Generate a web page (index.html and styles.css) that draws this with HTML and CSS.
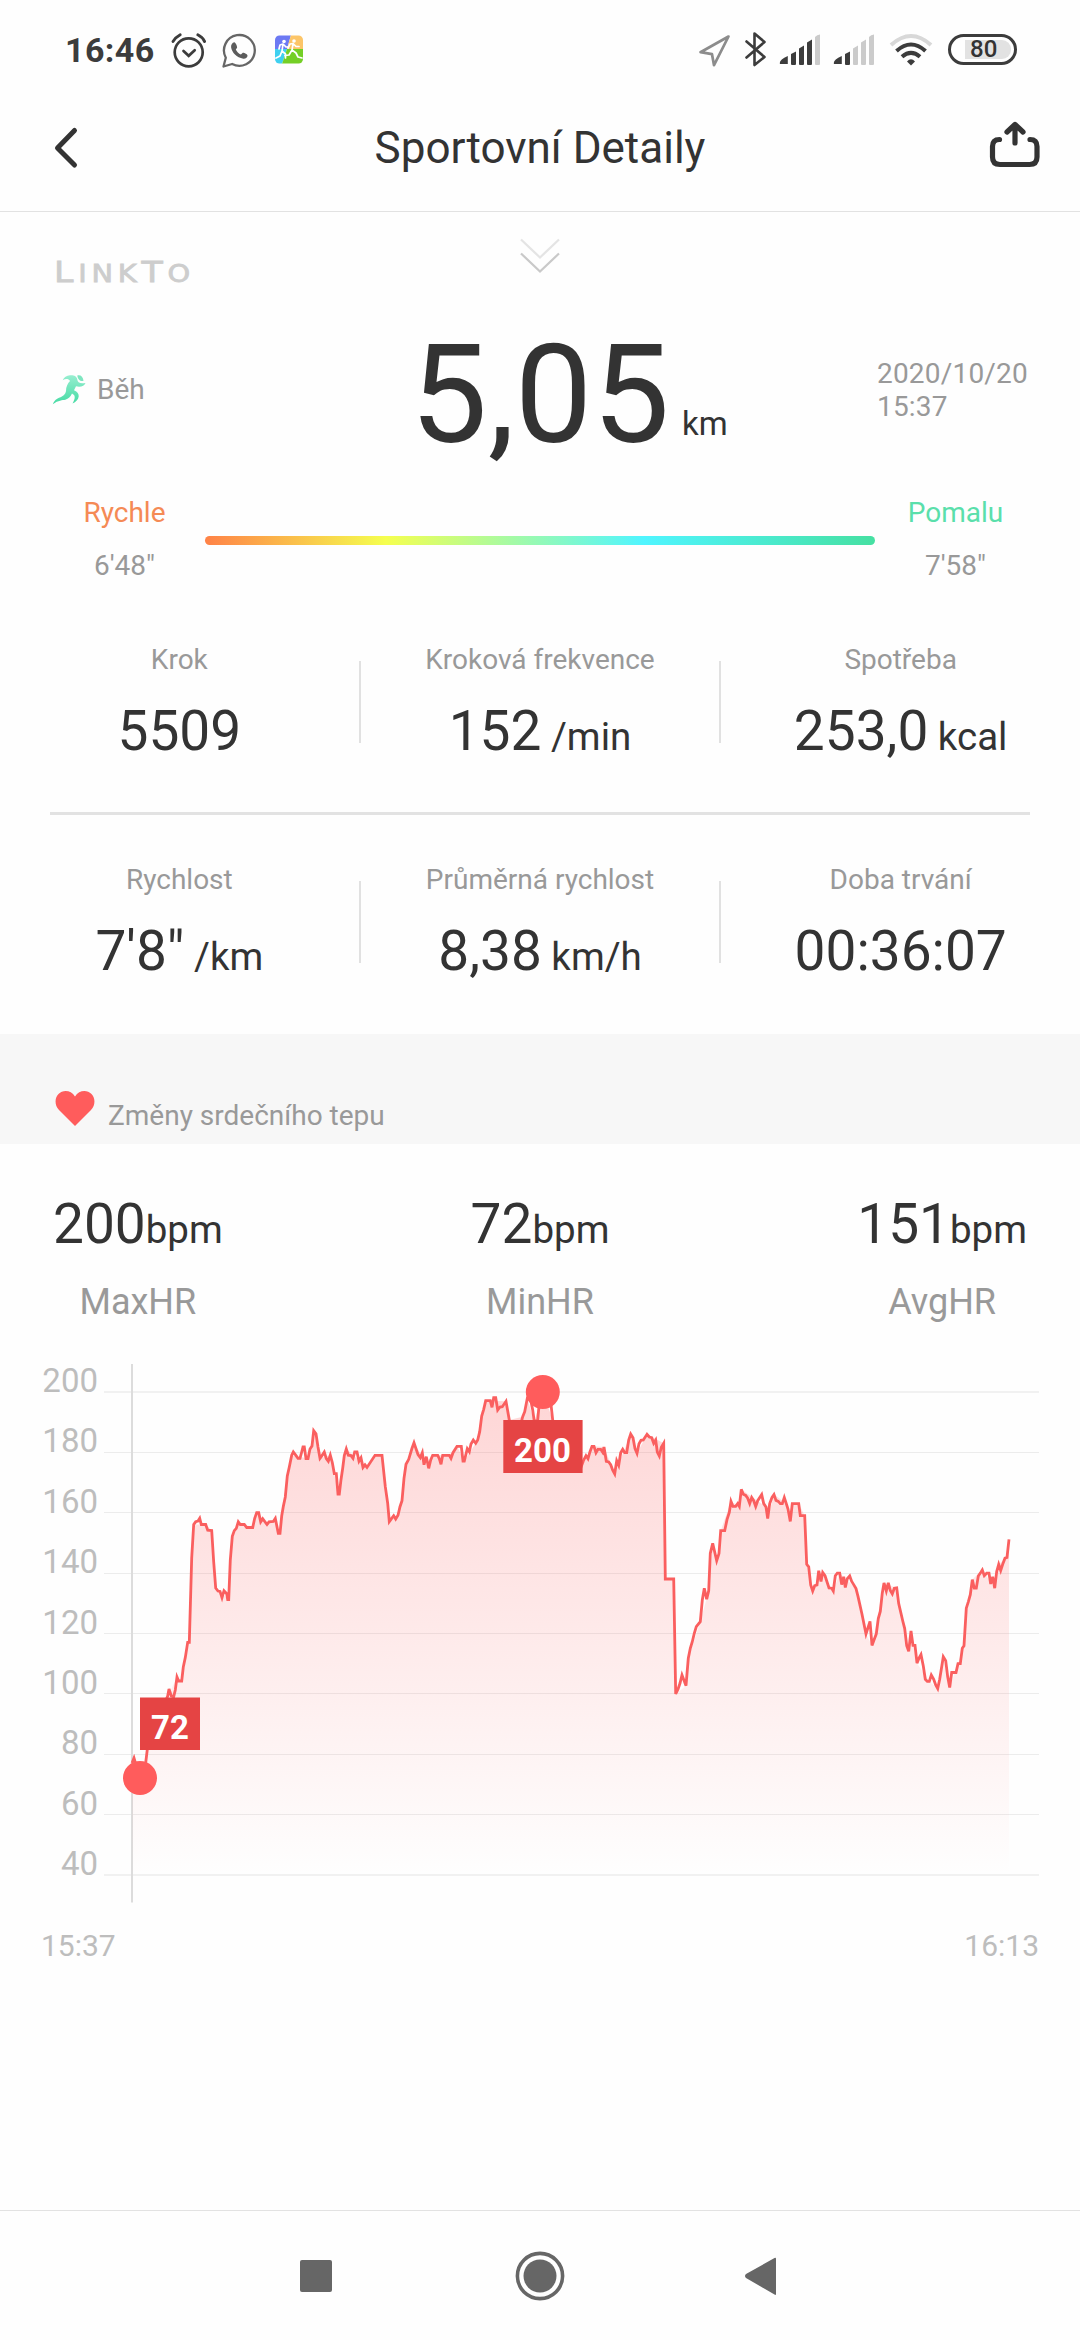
FILE: index.html
```html
<!DOCTYPE html>
<html lang="cs">
<head>
<meta charset="utf-8">
<title>Sportovní Detaily</title>
<link rel="stylesheet" href="styles.css">
</head>
<body>
<div class="screen">
  <div class="status">
    <span class="time">16:46</span>
    <svg class="i-alarm" width="38" height="40" viewBox="170 30 38 40" fill="none" stroke="#3c3c3c" stroke-linecap="round">
      <circle cx="188.7" cy="52.3" r="14" stroke-width="2.7"/>
      <path d="M183.5 51l5.2 4.8 6-5.6" stroke-width="2.7"/>
      <path d="M173 41.5c2-3 4-5 7.200-6.700M197.800 34.800c3 1.500 5.300 3.700 6.800 6.700" stroke-width="2.900"/>
    </svg>
    <svg class="i-wa" width="38" height="40" viewBox="220 30 38 40">
      <path d="M223.500 66.500l2.300-8.800a15.400 15.400 0 1 1 6.300 6.300z" fill="none" stroke="#666" stroke-width="2.300" stroke-linejoin="round"/>
      <path d="M234.300 42.300c-2 .3-3.500 2.700-3.200 5 .8 5.300 5.500 10.200 12.200 11.500 2.200.3 4.400-1.300 4.200-3.500-.1-1-3.800-2.900-4.700-2.500l-1.900 1.800c-2.200-.9-4.200-2.900-5.100-5l1.300-1.900c.4-.9-1.600-5.500-2.800-5.400z" fill="#5c5c5c"/>
    </svg>
    <svg class="i-app" width="30" height="40" viewBox="274 30 30 40">
      <defs><clipPath id="app"><rect x="275" y="35.500" width="28" height="28" rx="4.500"/></clipPath></defs>
      <g clip-path="url(#app)">
        <path d="M275 35h16l-4 14h-12z" fill="#6c79f3"/>
        <path d="M291 35h12v14h-16z" fill="#fcc568"/>
        <path d="M275 49h12l-5 15h-7z" fill="#3fd0f0"/>
        <path d="M287 49h16v15h-21z" fill="#74cf26"/>
      </g>
      <g fill="none" stroke="#fff" stroke-width="1.700" stroke-linecap="round" stroke-linejoin="round">
        <path d="M283 44l-1 7 3.500 3v4M282 51l-2 5-4 2M279 49l1-4 3-1 3 3h2"/>
        <path d="M293 44l-1 6 4 3 2 4 4 1M292 50l-3 5-4 .500M288 48l2-4 3-.500 3 3h3"/>
      </g>
      <circle cx="284" cy="41.500" r="1.800" fill="#fff"/><circle cx="294" cy="41" r="1.800" fill="#fff"/>
    </svg>
    <span class="spacer"></span>
    <svg width="34" height="40" viewBox="698 30 34 40"><path d="M728.500 36.500l-28 15.700 11.500 2 2 11z" fill="none" stroke="#8c8c8c" stroke-width="2.700" stroke-linejoin="round"/></svg>
    <svg class="i-bt" width="24" height="40" viewBox="744 30 24 40"><path d="M746.500 41.500l18 15.500-10 8V33.500l10 8.500-18 15.500" fill="none" stroke="#3c3c3c" stroke-width="2.600" stroke-linecap="round" stroke-linejoin="round"/></svg>
    <svg class="i-sig" width="42" height="40" viewBox="779 30 42 40" fill="#3c3c3c">
      <path d="M780 64q-1.500-4 7.800-8V64zM791 54l5-2.500V64q0 1-1 1h-3q-1 0-1-1zM799 48.500l5-3V64q0 1-1 1h-3q-1 0-1-1zM807 42.500l5-3V64q0 1-1 1h-3q-1 0-1-1z"/>
      <path d="M815 37q2-2.500 5-2.500V64q0 1-1 1h-3q-1 0-1-1z" fill="#cbcbcb"/>
    </svg>
    <svg class="i-sig2" width="42" height="40" viewBox="779 30 42 40" fill="#3c3c3c">
      <path d="M780 64q-1.500-4 7.800-8V64zM791 54l5-2.500V64q0 1-1 1h-3q-1 0-1-1z"/>
      <path d="M799 48.500l5-3V64q0 1-1 1h-3q-1 0-1-1zM807 42.500l5-3V64q0 1-1 1h-3q-1 0-1-1zM815 37q2-2.500 5-2.500V64q0 1-1 1h-3q-1 0-1-1z" fill="#cbcbcb"/>
    </svg>
    <svg class="i-wifi" width="44" height="40" viewBox="889 30 44 40" fill="none" stroke="#3c3c3c">
      <path d="M891 45Q911 27 931 45" stroke="#d8d8d8" stroke-width="4"/>
      <path d="M896.500 51Q911 38 925.500 51" stroke-width="4"/>
      <path d="M902 56.800Q911 49 920 56.800" stroke-width="4"/>
      <path d="M907 61.500q4-4.500 8 0l-4 4z" fill="#3c3c3c" stroke="none"/>
    </svg>
    <div class="battery"><span>80</span></div>
  </div>

  <header class="header">
    <svg width="30" height="44" viewBox="50 127 30 44"><path d="M74.500 131.500L57.500 149l17 17" fill="none" stroke="#333" stroke-width="5" stroke-linecap="round" stroke-linejoin="round"/></svg>
    <h1>Sportovní Detaily</h1>
    <svg class="share" width="54" height="52" viewBox="987 119 54 52" fill="none" stroke="#333" stroke-width="5.200" stroke-linecap="round" stroke-linejoin="round">
      <path d="M998.500 139.500q-7 0-7 7V157q0 7.500 7.500 7.500h29.500q7.500 0 7.500-7.500v-10.500q0-7-7-7"/>
      <path d="M1014 143V124.500M1006 132l8-7.500 8 7.500"/>
    </svg>
  </header>

  <div class="brand-row">
    <svg width="170" height="54" viewBox="44 245 170 54" class="brand"><text x="54" y="281.500" font-size="29" textLength="141" lengthAdjust="spacingAndGlyphs">L<tspan font-size="24">INK</tspan>T<tspan font-size="24">O</tspan></text></svg>
    <svg width="42" height="40" viewBox="519 235 42 40" fill="none" stroke-width="2.200">
      <path d="M521 239.500l19 18 19-18" stroke="#e4e4e4"/><path d="M521 253.500l19 18 19-18" stroke="#c9c9c9"/>
    </svg>
  </div>

  <div class="distance">
    <div class="sport">
      <svg width="36" height="34" viewBox="52 372 36 34">
        <defs><linearGradient id="run" x1="0" y1="0" x2="0" y2="1"><stop offset="0" stop-color="#97eed0"/><stop offset="1" stop-color="#46dba4"/></linearGradient></defs>
        <path d="M62.700 379.300C64 376.500 66.500 374.600 70 374.300 74 374 77 375.500 77.300 378.500 77.500 381.500 80 383 85.500 382 84.500 385 80.500 386.500 76 385.300L74 389.300C77.500 391 79 393 78.700 395.500 78.300 398.500 76 401 72.500 402.500 74.500 399 75.500 396 74 394L72 392.500C70.500 395.500 68.500 398 65.300 398.700 62.500 399.300 58.500 399 52.700 403.200 54 400 56.500 397.500 59 396.700 63.500 395.500 65.500 393 66 390 66 386 67.500 382.500 70 380 68.500 377.500 65.500 377.500 62.700 379.300z" fill="url(#run)"/>
        <path d="M77.300 374.500c3-1 5.800 1 6.200 5.300-3 1-5.800-1.300-6.200-5.300z" fill="#7fe6c0"/>
      </svg>
      <span>Běh</span>
    </div>
    <div class="number">5,05</div>
    <div class="right"><span class="km">km</span><span class="date">2020/10/20<br>15:37</span></div>
  </div>

  <div class="pace">
    <div><div class="fast">Rychle</div><div>6'48"</div></div>
    <div class="bar"></div>
    <div><div class="slow">Pomalu</div><div>7'58"</div></div>
  </div>

  <div class="stats">
    <div><label>Krok</label><p>5509</p></div><i></i>
    <div><label>Kroková frekvence</label><p>152<small> /min</small></p></div><i></i>
    <div><label>Spotřeba</label><p>253,0<small> kcal</small></p></div>
  </div>
  <div class="rule"></div>
  <div class="stats second">
    <div><label>Rychlost</label><p>7'8"<small> /km</small></p></div><i></i>
    <div><label>Průměrná rychlost</label><p>8,38<small> km/h</small></p></div><i></i>
    <div><label>Doba trvání</label><p>00:36:07</p></div>
  </div>

  <div class="band">
    <svg width="40" height="36" viewBox="0 0 40 36"><path d="M20 35L4 19C-1 14 0 6 3.500 3 8-1.500 16-1 20 5.500 24-1 32-1.500 36.500 3 40 6 41 14 36 19z" fill="#ff5c5c"/></svg>
    <span>Změny srdečního tepu</span>
  </div>

  <div class="hr">
    <div><p>200<small>bpm</small></p><label>MaxHR</label></div>
    <div><p>72<small>bpm</small></p><label>MinHR</label></div>
    <div><p>151<small>bpm</small></p><label>AvgHR</label></div>
  </div>

  <svg class="chart" width="1080" height="640" viewBox="0 1340 1080 640">
    <defs>
      <linearGradient id="fill" gradientUnits="userSpaceOnUse" x1="0" y1="1392" x2="0" y2="1875"><stop offset="0" stop-color="#ff5c5c" stop-opacity=".25"/><stop offset="1" stop-color="#ff5c5c" stop-opacity="0"/></linearGradient>
      <path id="curve" d="M132 1763L134 1758 136 1765 140 1778 145.700 1763 147.700 1746 155 1720 163 1707 167.700 1696 169 1689 171.300 1696 173.700 1696.700 175.300 1690 177 1677 178.700 1681 181.700 1681 183.300 1667 185.300 1657.600 187.700 1642.300 189.300 1642.300 191.700 1558 193.700 1524.500 195.700 1521.800 198 1521 199.700 1518.300 201.300 1524.500 205.700 1524.500 207.700 1530.200 211.700 1530.500 213.700 1562 215.700 1588 218 1591 220 1591.400 222 1597.600 224 1590.700 226.700 1593.700 227.700 1599.500 228.700 1599.500 230.300 1560 232.300 1536.300 234.300 1530.600 236.300 1528.300 238.300 1521.800 240.300 1524.500 244.300 1524.500 246.700 1527.500 252.700 1527.500 254.700 1518.300 256.700 1512.600 258.700 1512.600 260.700 1521.800 262.700 1518.700 267 1524.500 269 1521.800 273.300 1521.400 275.300 1518.300 278.300 1533.300 280 1533.300 281.700 1516 283.300 1506.500 285.300 1497 287.300 1475.900 289.300 1467 291.700 1455.200 293.300 1452 295.700 1455.200 298 1458.300 300 1458.300 301.700 1452 303 1446.800 304.300 1446.800 306 1458.600 308 1458.600 310 1449 312 1446 313.700 1430.700 316 1433.800 318 1447 320 1458.300 322 1455.600 324.300 1452 326.300 1458.600 328.300 1461.300 330.300 1455.200 332.300 1462.500 334.300 1473.600 336.300 1473.600 338 1494.200 339.300 1494.200 341 1479.700 342.700 1468.200 344.300 1455.600 346.300 1449 348.300 1455.200 351 1455.600 353 1458.300 354.700 1452 357 1452 359 1461.300 361 1457.900 363 1467.400 365 1464.800 367 1467.400 375 1455.300 382 1455.300 385.300 1486.700 387.700 1503.300 389.300 1521.700 393.700 1515.700 395.700 1519 398 1515.300 400 1506.700 402 1500.700 404 1478.300 406 1464.300 408.700 1459.300 412 1448.300 414 1442.700 418 1454.700 420.300 1457.700 422.300 1452.700 424 1464.700 426.300 1456.700 428.700 1468.300 430.700 1460 432.700 1455.300 437.700 1455.300 439.300 1458.700 441 1464.300 442.700 1455.300 449.300 1455.300 451 1458.300 453 1452.700 457 1446.300 461.300 1446.300 463 1461 464.300 1461 467.300 1448.700 469.300 1451.700 471 1444 473.300 1440 475.700 1443.300 477.700 1440 479.700 1431.700 481.700 1416 483.700 1409.300 485.700 1400.700 490.300 1400.700 492 1407.300 493.700 1397.700 495.700 1397.700 497.700 1410 500 1407 502.300 1406.700 506 1401.300 509.300 1420 513.300 1430 520 1427 522.700 1416.700 524.700 1411.700 527.300 1398.300 530.700 1400 532.700 1410 534.300 1421.700 537.700 1420 539.300 1403 543 1392 550.700 1401.700 552.700 1420 570 1460 580 1470 583.700 1460 586 1455.700 588 1458.700 590 1451.700 592 1446.300 594 1446.300 596 1452.700 598 1449.300 600.700 1449.300 602.700 1452.300 604 1447 606.300 1461.300 608.700 1462 610.700 1464.700 612.700 1470.300 614.700 1474 616.700 1460.700 618.700 1465.300 620.700 1452.700 622.700 1449.300 624.700 1452.700 626.700 1452.700 628.700 1440 630.700 1434 633 1437.700 635 1448.700 637 1453.300 639 1443.700 641 1440.300 643.300 1440 647 1434.300 649.300 1437 651.700 1437.700 653.700 1443.300 655.700 1440 657.300 1452 659.300 1456 661.300 1447.300 663.700 1443.300 665.300 1579 673.700 1579 675.700 1694 678 1689.300 680 1683.300 682 1675 686 1685.700 688.300 1658.300 690.300 1648.300 692.300 1641.700 694.300 1633.300 696.300 1626.700 700.300 1621.700 702.300 1600 704.300 1588.300 706.700 1599.300 708.700 1590.700 710.300 1553.300 712.700 1543.300 716.700 1560.700 719 1553.600 720.700 1530.700 724.700 1530.700 727 1519.600 729.300 1512.500 731 1501.400 733 1506.400 735.700 1506.400 737.700 1503.600 739.300 1506.400 741.300 1489.300 743.300 1494.300 745.700 1495.400 747.700 1498.200 749.700 1503.600 751.700 1497.500 753.700 1500.700 755.700 1506.400 757.700 1500.700 761.700 1494.600 763.700 1503.600 766 1507 767.700 1518.600 769.700 1503.600 772 1497.500 774 1494.600 776 1500.400 778.300 1501.400 780.300 1503.600 782.300 1503.600 784.300 1497.500 786.300 1503.600 788 1509 790.300 1521.400 792.300 1503.600 798.700 1503.600 800.300 1515.700 804.700 1515.700 806.700 1564.300 808.700 1566.800 810.700 1585 812.700 1591 814.700 1585.700 817 1585 818.700 1570.700 821 1581.400 822.700 1572.500 825 1575.700 829 1587.900 831.700 1588.200 833.300 1591 835.300 1575.700 837.300 1573.200 839.700 1573.200 841.700 1584.600 843.700 1576.800 845.300 1587.500 847.300 1578.600 849.700 1576 851.700 1581.400 853.700 1584.600 856 1588.600 858 1596.400 862 1614.300 866 1634 870 1621.400 872 1645.400 874 1640 876.300 1634 878.300 1618.600 880.300 1611.400 882.300 1592.900 884 1582.900 886.300 1591 888.300 1582.900 890.300 1590.400 892.300 1593.900 894.300 1588.200 896.700 1587.900 898.700 1603.600 902.700 1620.700 904.700 1628.600 906.700 1645.700 908.700 1651.400 911 1631 913 1645.400 915 1645.400 917 1663.200 919 1658.200 921 1654.600 923.300 1666 925.300 1679.300 927.300 1681.400 929.300 1681.400 931.300 1675 933.700 1679.300 935.700 1685 937.700 1688.600 939.700 1679.300 943.300 1656.800 945.700 1660.700 947.700 1676.800 949.700 1687.500 951.700 1672.500 956 1672.500 958 1663.600 960.300 1663.600 962.300 1648.200 964 1645.700 966.300 1608.200 968.300 1601.800 970.300 1594.600 972.300 1579.600 974.300 1588.200 976.300 1588.200 978.300 1576 980.700 1572.500 982.300 1570 984.300 1575.700 986.700 1573.200 989 1573.200 990.700 1584 992.700 1576.800 994.700 1588.200 996.700 1571.400 998.700 1564.300 1000.700 1570.400 1002.700 1564.300 1005 1558.200 1007 1557.500 1009 1539.300"/>
      <clipPath id="plot"><path d="M132 1364H1010V1875H132z"/></clipPath>
    </defs>
    <g class="grid">
      <path class="edge" d="M104 1392H1039M104 1875H1039"/>
      <path d="M104 1452.500H1039M104 1512.500H1039M104 1573.500H1039M104 1633.500H1039M104 1693.500H1039M104 1754.500H1039M104 1814.500H1039"/>
    </g>
    <path class="axis" d="M132 1364V1902.500"/>
    <path fill="url(#fill)" d="M132 1763L134 1758 140 1778 147.700 1746 163 1707 177 1677 181.700 1681 189.300 1642.300 193.700 1524.500 205.700 1524.500 211.700 1530.500 215.700 1588 228.700 1599.500 232.300 1536.300 238.300 1522 252.700 1527.500 257.700 1512.600 267 1524.500 275.300 1518.300 279 1533.300 287.300 1475.900 291.700 1455.200 308 1458.600 314 1430.700 320 1458.300 330.300 1455.200 338.700 1494.200 346.300 1449 367 1467.400 375 1455.300 382 1455.300 389.300 1521.700 398 1515.300 402 1500.700 406 1464.300 414 1442.700 428.700 1468.300 432.700 1455.300 449.300 1455.300 457 1446.300 464.300 1461 477.700 1440 485.700 1400.700 506 1401.300 509.300 1420 522.700 1416.700 527.300 1398.300 534.300 1421.700 543 1392 552.700 1420 570 1460 580 1470 592 1446.300 604 1447 614.700 1474 630.700 1434 637 1453.300 647 1434.300 663.700 1443.300 665.300 1579 673.700 1579 675.700 1694 686 1685.700 688.300 1658.300 700.300 1621.700 708.700 1590.700 712.700 1543.300 716.700 1560.700 720.700 1530.700 731 1501.400 739.300 1506.400 741.300 1489.300 766 1507 767.700 1518.600 774 1494.600 786.300 1503.600 790.300 1521.400 792.300 1503.600 798.700 1503.600 804.700 1515.700 806.700 1564.300 812.700 1591 820 1572 833.300 1591 839.700 1573.200 856 1588.600 866 1634 872 1645.400 884 1582.900 896.700 1587.900 908.700 1651.400 911 1631 917 1663.200 929.300 1681.400 937.700 1688.600 943.300 1656.800 949.700 1687.500 964 1645.700 966.300 1608.200 972.300 1579.600 982.300 1570 994.700 1588.200 998.700 1564.300 1007 1557.500 1009 1539.300V1875H132z" clip-path="url(#plot)"/>
    <use href="#curve" class="line"/>
    <g class="tips">
      <rect x="140" y="1697.500" width="60" height="52.500"/><rect x="503.300" y="1420" width="79.300" height="53"/>
      <circle cx="140" cy="1778" r="17"/><circle cx="542.800" cy="1392" r="17"/>
      <text x="170" y="1738.600">72</text><text x="542.500" y="1461.600">200</text>
    </g>
    <g class="ylab">
      <text x="98" y="1392">200</text><text x="98" y="1452">180</text><text x="98" y="1513">160</text><text x="98" y="1573">140</text><text x="98" y="1634">120</text><text x="98" y="1694">100</text><text x="98" y="1754">80</text><text x="98" y="1815">60</text><text x="98" y="1875">40</text>
    </g>
    <text class="xlab" x="41" y="1956">15:37</text><text class="xlab end" x="1039" y="1956">16:13</text>
  </svg>

  <nav class="nav">
    <svg width="50" height="50" viewBox="0 0 50 50"><rect x="9" y="9" width="32" height="32" rx="2"/></svg>
    <svg width="50" height="50" viewBox="0 0 50 50"><circle cx="25" cy="25" r="22.600" fill="none" stroke="#666" stroke-width="3.600"/><circle cx="25" cy="25" r="16.500"/></svg>
    <svg class="back" width="50" height="50" viewBox="0 0 50 50"><path d="M38.500 7q1.500-1 1.500 1v35q0 1.500-1.500.5L10 27q-2-2 0-4z"/></svg>
  </nav>
</div>
</body>
</html>
```
FILE: styles.css
```css
* { box-sizing: border-box; }
body { margin: 0; background: #fefefe; font-family: Roboto, sans-serif; color: #333; }
svg { display: block; flex: none; }
p, h1 { margin: 0; font-weight: 400; }
.screen { width: 1080px; height: 2340px; display: flex; flex-direction: column; overflow: hidden; }
.screen > * { flex: none; }

.status { height: 100px; padding: 0 63px 0 65px; display: flex; align-items: center; }
.time { width: 105px; font-size: 34px; font-weight: 700; letter-spacing: .4px; color: #3c3c3c; white-space: nowrap; }
.i-wa, .i-bt, .i-sig2 { margin-left: 12px; }
.i-app { margin-left: 16px; }
.spacer { flex: 1; }
.i-sig { margin-left: 11px; }
.i-wifi { margin-left: 14px; }
.battery { margin-left: 15px; width: 69px; height: 31px; margin-bottom: 2px; padding: 3px; border: 3px solid #3c3c3c; border-radius: 16px; }
.battery span { display: block; height: 19px; margin: 0 0 0 11px; padding-left: 5px; border-radius: 0 9px 9px 0; background: #e2e2e2; font-size: 24px; font-weight: 500; line-height: 19px; }

.header { height: 112px; padding: 0 38px 15px 50px; border-bottom: 1px solid #e2e2e2; display: grid; grid-template-columns: 1fr auto 1fr; align-items: center; }
.header h1 { font-size: 44px; position: relative; left: -6px; }
.share { justify-self: end; position: relative; top: -3px; }

.brand-row { height: 88px; padding: 23px 54px 0 44px; display: grid; grid-template-columns: 1fr auto 1fr; align-items: start; }
.brand-row svg:last-child { margin-left: 10px; }
.brand { margin-top: 10px; }
.brand text { font-family: "DejaVu Sans", sans-serif; fill: #cdcdcd; stroke: #cdcdcd; stroke-width: .8; letter-spacing: 4px; }

.distance { height: 179px; padding: 0 52px; display: grid; grid-template-columns: 1fr auto 1fr; align-items: center; font-size: 28px; color: #999; }
.sport { display: flex; align-items: center; gap: 9px; }
.number { font-size: 138px; line-height: 138px; padding-top: 10px; color: #333; }
.right { display: flex; align-items: center; justify-content: space-between; }
.km { margin: 68px 0 0 12px; font-size: 33px; color: #333; }
.date { line-height: 33px; letter-spacing: .2px; }

.pace { height: 113px; padding: 8px 44px 0; display: grid; grid-template-columns: 161px 1fr 161px; text-align: center; font-size: 28px; line-height: 52.500px; color: #999; }
.fast { color: #f58a55; }
.slow { color: #5adfab; }
.bar { height: 9px; margin-top: 49px; border-radius: 5px; background: linear-gradient(90deg, #ff8247, #f5ff4f 27%, #50f5ff 65.500%, #46e0a2); }

.stats { height: 220px; padding-top: 51px; display: grid; grid-template-columns: 1fr 2px 1fr 2px 1fr; align-items: start; text-align: center; }
.stats.second { height: 219px; padding-top: 48px; }
.stats i { height: 82px; margin-top: 18px; background: #e1e1e1; }
.stats label { display: block; font-size: 28px; line-height: 34px; color: #999; }
.stats p { margin-top: 21px; }
.stats p, .hr p { height: 66px; font-size: 55px; line-height: 66px; }
small { font-size: 38.500px; line-height: 1; }
.rule { height: 3px; margin: 0 50px; background: #e2e2e2; }

.band { height: 110px; padding: 57px 55px 0; display: flex; align-items: flex-start; gap: 13px; background: #f7f7f7; }
.band span { margin-top: 8px; font-size: 28px; line-height: 34px; color: #999; }

.hr { height: 180px; padding: 47px 53px 0; display: flex; justify-content: space-between; text-align: center; }
.hr label { display: block; margin-top: 23px; font-size: 36px; line-height: 44px; color: #999; }

.chart { margin-top: 16px; }
.grid path { stroke: #ececec; }
.grid .edge { stroke: #f1f1f1; stroke-width: 2; }
.axis { stroke: #dcdcdc; stroke-width: 2; }
.line { fill: none; stroke: #fa5f5f; stroke-width: 2.800; }
.tips rect { fill: #e54444; }
.tips circle { fill: #ff5c5c; }
.tips text { fill: #fff; font-size: 33px; font-weight: 700; text-anchor: middle; }
.ylab { fill: #bdbdbd; font-size: 33px; text-anchor: end; }
.xlab { fill: #bdbdbd; font-size: 30px; }
.end { text-anchor: end; }

.nav { height: 130px; margin-top: auto; border-top: 1px solid #e2e2e2; display: flex; align-items: center; padding-left: 291px; gap: 174px; fill: #666; }
.back { margin-left: -3px; }
```
